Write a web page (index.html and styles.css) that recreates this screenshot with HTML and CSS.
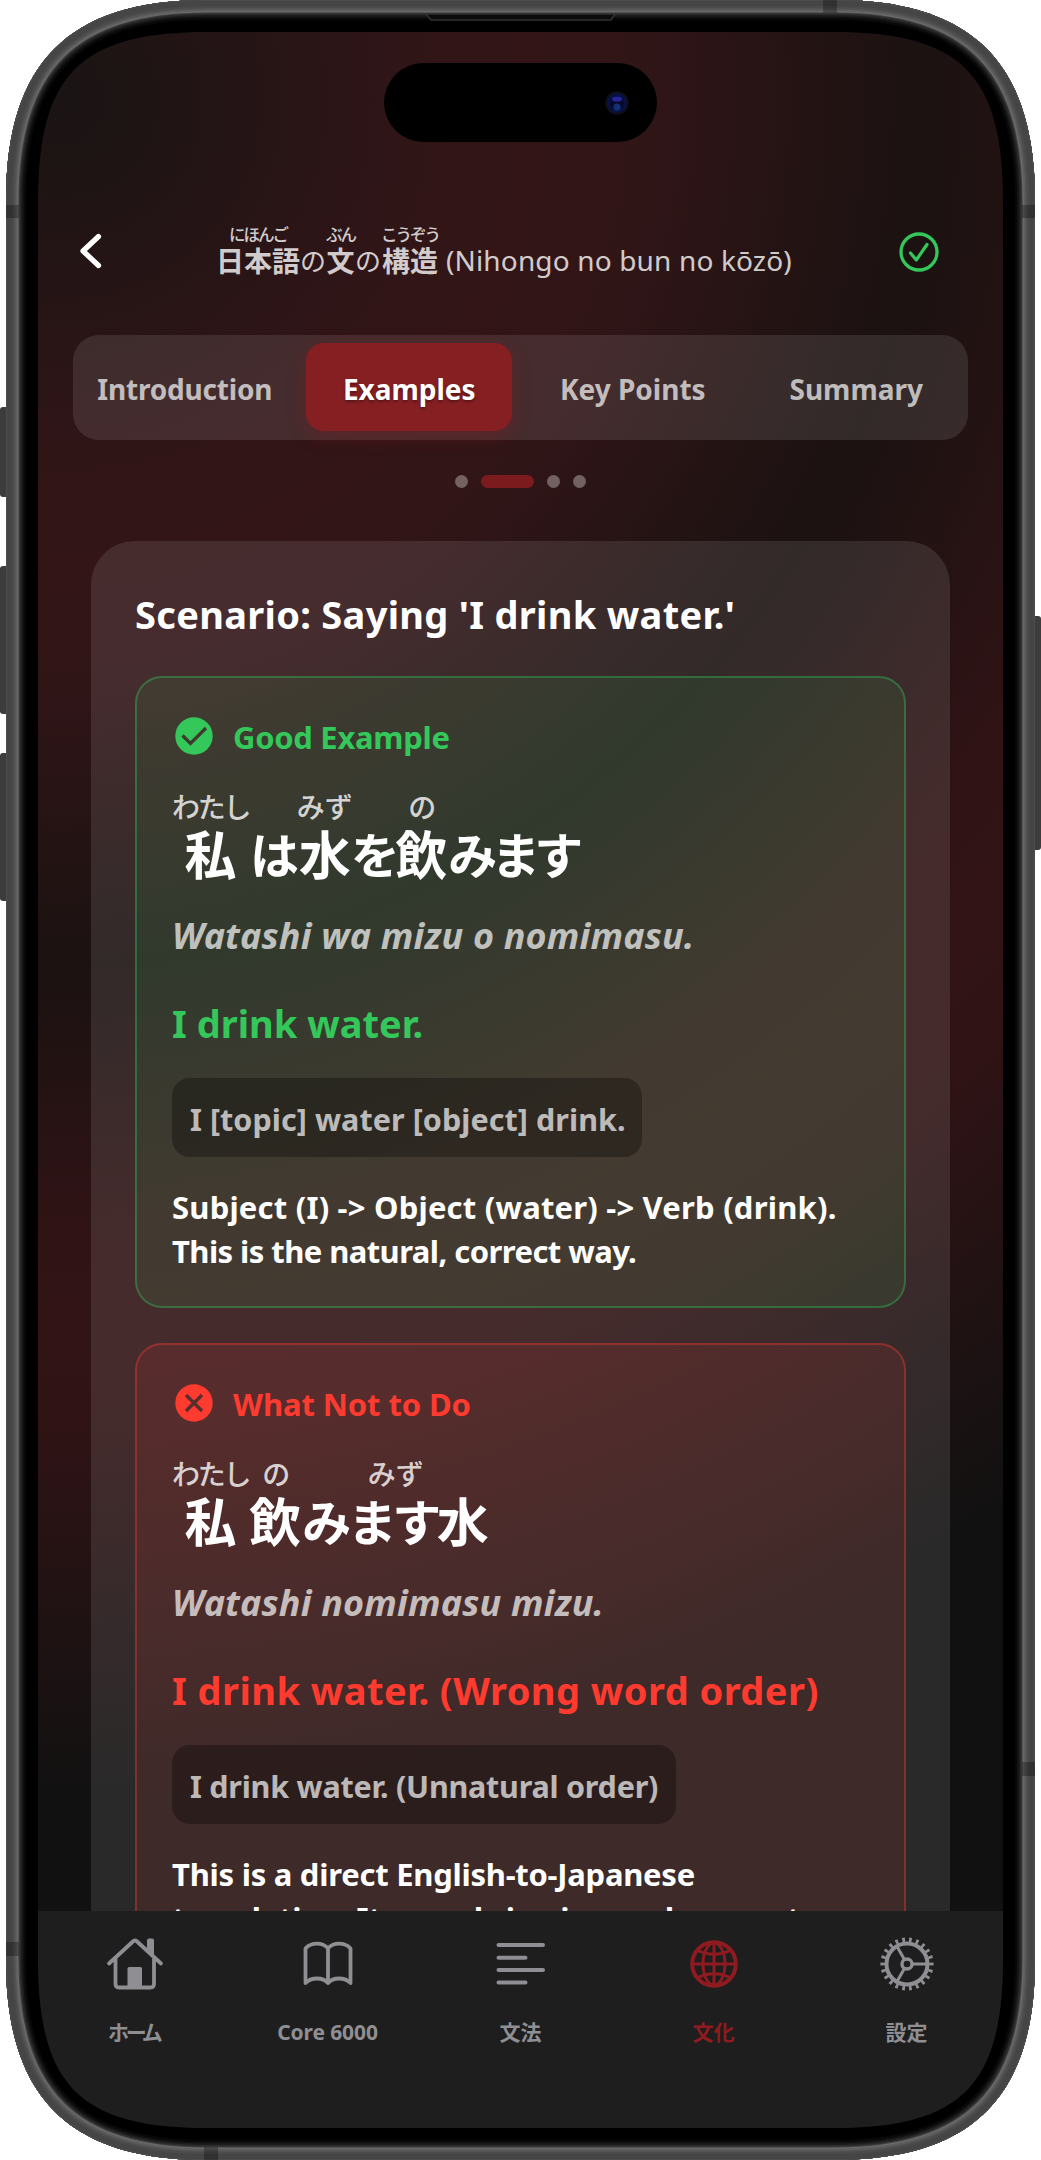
FILE: index.html
```html
<!DOCTYPE html>
<html lang="ja">
<head>
<meta charset="utf-8">
<title>日本語の文の構造</title>
<link rel="stylesheet" href="styles.css">
</head>
<body>
<div class="device">
  <svg class="frame" viewBox="0 0 1041 2160" aria-hidden="true">
    <defs>
      <path id="shell" d="M206 0H835C972 0 1035 63 1035 200V1960C1035 2097 972 2160 835 2160H206C69 2160 6 2097 6 1960V200C6 63 69 0 206 0Z"/>
      <clipPath id="shell-clip"><use href="#shell"/></clipPath>
    </defs>
    <g fill="#3c3c3c">
      <rect x="0" y="407" width="12" height="90" rx="3"/>
      <rect x="0" y="566" width="12" height="148" rx="3"/>
      <rect x="0" y="753" width="12" height="148" rx="3"/>
      <rect x="1029" y="616" width="12" height="234" rx="3"/>
    </g>
    <g clip-path="url(#shell-clip)" fill="none">
      <use href="#shell" fill="#000"/>
      <use href="#shell" stroke="#080808" stroke-width="40"/>
      <use href="#shell" stroke="#111" stroke-width="36"/>
      <use href="#shell" stroke="#1d1d1d" stroke-width="33"/>
      <use href="#shell" stroke="#2b2b2b" stroke-width="30"/>
      <use href="#shell" stroke="#404040" stroke-width="27"/>
      <use href="#shell" stroke="#686868" stroke-width="25"/>
      <use href="#shell" stroke="#5e5e5e" stroke-width="22"/>
      <use href="#shell" stroke="#535353" stroke-width="19"/>
      <use href="#shell" stroke="#4b4b4b" stroke-width="16"/>
      <use href="#shell" stroke="#454545" stroke-width="12"/>
      <use href="#shell" stroke="#4c4c4c" stroke-width="2"/>
      <g fill="#000" fill-opacity=".28">
        <rect x="823" y="0" width="14" height="13"/>
        <rect x="204" y="2147" width="14" height="13"/>
        <rect x="6" y="205" width="13" height="13"/>
        <rect x="6" y="1942" width="13" height="14"/>
        <rect x="1022" y="205" width="13" height="13"/>
        <rect x="1022" y="1762" width="13" height="14"/>
      </g>
    </g>
    <path d="M426 14L431 20H611L615 14Z" fill="#0c0c0c" stroke="#303030" stroke-width="1.6"/>
  </svg>

  <main class="screen">
    <div class="island">
      <svg width="24" height="24" viewBox="0 0 24 24"><circle cx="12" cy="12" r="11.5" fill="#10101c"/><circle cx="12" cy="12" r="9.5" fill="#08104a"/><circle cx="12" cy="12" r="7" fill="#050a2c"/><ellipse cx="12" cy="8" rx="5" ry="2.6" fill="#26269a"/><circle cx="12" cy="16" r="3.6" fill="#14306e"/></svg>
    </div>

    <header class="header">
      <svg class="back" width="27" height="40" viewBox="0 0 27 40"><path d="M20.500 5.500L5 20L20.500 34.500" fill="none" stroke="#fff" stroke-width="5.200" stroke-linecap="round" stroke-linejoin="round"/></svg>
      <h1 class="title">
        <span class="unit"><span class="kana">にほんご</span><b>日本語</b></span><span class="particle">の</span><span class="unit"><span class="kana">ぶん</span><b>文</b></span><span class="particle">の</span><span class="unit"><span class="kana">こうぞう</span><b>構造</b></span><span class="reading">(Nihongo no bun no kōzō)</span>
      </h1>
      <svg class="done" width="40" height="40" viewBox="0 0 40 40" fill="none" stroke="#34c759" stroke-linecap="round" stroke-linejoin="round"><circle cx="20" cy="20" r="18" stroke-width="3.300"/><path d="M11.500 21L17.300 28L28 12.500" stroke-width="3.200"/></svg>
    </header>

    <nav class="tabs">
      <span class="tab intro">Introduction</span>
      <span class="tab active">Examples</span>
      <span class="tab">Key Points</span>
      <span class="tab">Summary</span>
    </nav>

    <div class="dots"><i></i><i class="on"></i><i></i><i></i></div>

    <section class="card">
      <h2 class="scenario">Scenario: Saying 'I drink water.'</h2>

      <article class="example good">
        <div class="label"><svg width="38" height="38" viewBox="0 0 38 38"><circle cx="19" cy="19" r="18.700" fill="#34c759"/><path d="M7.500 18.500L15.500 26.500L31 11" fill="none" stroke="#3f3a2f" stroke-width="3.200"/></svg><span>Good Example</span></div>
        <div class="sentence">
          <span class="unit"><span class="kana">わたし</span><b>私</b></span><span class="plain topic">は</span><span class="unit short"><span class="kana">みず</span><b>水</b></span><span class="plain">を</span><span class="unit"><span class="kana">の</span><b>飲</b></span><span class="plain verb">みます</span>
        </div>
        <p class="romaji">Watashi wa mizu o nomimasu.</p>
        <p class="meaning">I drink water.</p>
        <p class="gloss">I [topic] water [object] drink.</p>
        <p class="note"><span class="wide">Subject (I) -&gt; Object (water) -&gt; Verb (drink).</span><span class="tight">This is the natural, correct way.</span></p>
      </article>

      <article class="example bad">
        <div class="label"><svg width="38" height="38" viewBox="0 0 38 38"><circle cx="19" cy="19" r="18.700" fill="#ff3b30"/><path d="M11 11L27 27M27 11L11 27" fill="none" stroke="#562e2e" stroke-width="3.300"/></svg><span>What Not to Do</span></div>
        <div class="sentence">
          <span class="unit"><span class="kana">わたし</span><b>私</b></span><span class="unit"><span class="kana">の</span><b>飲</b></span><span class="plain">み</span><span class="unit shifted"><span class="kana">みず</span><span class="plain">ます</span></span><b>水</b>
        </div>
        <p class="romaji">Watashi nomimasu mizu.</p>
        <p class="meaning">I drink water. (Wrong word order)</p>
        <p class="gloss">I drink water. (Unnatural order)</p>
        <p class="note"><span>This is a direct English-to-Japanese</span><span>translation. It sounds jarring and wrong to</span></p>
      </article>
    </section>

    <footer class="tabbar">
      <div class="item">
        <svg viewBox="-30 -30 60 60" stroke-width="3.800"><path d="M-26 -.500L-1.500 -23Q0 -24 1.500 -23L26 -.500M-19.500 -5V20Q-19.500 23.500 -16 23.500H15.500Q19 23.500 19 20V-5"/><path d="M12 -23.500Q12 -25.500 14 -25.500H17Q19 -25.500 19 -23.500V-8L12 -14Z" fill="currentColor" stroke="none"/><path d="M-7.500 23V4.500Q-7.500 3 -6 3H5.500Q7 3 7 4.500V23Z" fill="currentColor" stroke="none"/></svg>
        <span class="home">ホーム</span>
      </div>
      <div class="item">
        <svg viewBox="-30 -30 60 60" stroke-width="3.800"><path d="M0 -15.500C-5 -22 -17 -22 -22.500 -15.500V19C-17 13 -5 13 0 19C5 13 17 13 22.500 19V-15.500C17 -22 5 -22 0 -15.500V19"/></svg>
        <span class="core">Core 6000</span>
      </div>
      <div class="item">
        <svg viewBox="-30 -30 60 60" stroke-width="4"><path d="M-22.500 -19H22M-22.500 -6.300H4.500M-22.500 6H22M-22.500 18.500H4.500"/></svg>
        <span>文法</span>
      </div>
      <div class="item selected">
        <svg viewBox="-30 -30 60 60" stroke-width="3"><circle r="21.800" stroke-width="4"/><path d="M0 -21V21M-21 0H21M-17 -14Q0 -5.500 17 -14M-17 14Q0 5.500 17 14"/><ellipse rx="11" ry="21"/></svg>
        <span>文化</span>
      </div>
      <div class="item">
        <svg viewBox="-30 -30 60 60" stroke-width="3"><circle r="20.500" stroke-width="4"/><circle r="24.300" stroke-width="4.600" pathLength="22" stroke-dasharray=".4 .6" stroke-dashoffset=".2" stroke-linecap="butt"/><circle r="5" stroke-width="3.400"/><path d="M6 0H19M-3 -5.200L-9.700 -17M-3 5.200L-9.700 17"/></svg>
        <span>設定</span>
      </div>
    </footer>
  </main>
</div>
</body>
</html>
```
FILE: styles.css
```css
* { box-sizing: border-box; }

body {
  margin: 0;
  background: #fff;
  font-family: "Noto Sans", "Noto Sans CJK JP", sans-serif;
  font-weight: 700;
  color: #fff;
}

h1, h2, p { margin: 0; }

b { font-weight: 700; }

.device {
  position: relative;
  width: 1041px;
  height: 2160px;
  padding: 32px 38px;
  overflow: hidden;
}

.frame {
  position: absolute;
  inset: 0;
  width: 1041px;
  height: 2160px;
}

.screen {
  position: relative;
  display: flex;
  flex-direction: column;
  width: 965px;
  height: 2096px;
  overflow: hidden;
  background: radial-gradient(circle at 22px 68px, #1b1414 0, #1d1414 60px, #301517 350px, #331517 470px, #301517 590px, #1b1211 865px, #2f1315 1120px, #321416 1230px, #2f1315 1330px, #111 1700px);
  clip-path: path("M170 0H795C923 0 965 42 965 170V1926C965 2054 923 2096 795 2096H170C42 2096 0 2054 0 1926V170C0 42 42 0 170 0Z");
}

.island {
  display: flex;
  flex: none;
  align-items: center;
  justify-content: flex-end;
  width: 273px;
  height: 79px;
  margin: 31px 0 0 346px;
  padding-right: 28px;
  border-radius: 40px;
  background: #000;
}

/* Header */
.header {
  display: flex;
  flex: none;
  align-items: flex-start;
  height: 54px;
  margin-top: 84px;
  padding-left: 40px;
}

.back { flex: none; margin-top: 5px; }

.title {
  display: flex;
  flex: none;
  align-items: flex-end;
  width: 622px;
  height: 52px;
  margin-left: 111px;
  font-size: 28px;
  font-weight: 400;
  line-height: 36px;
  color: rgba(255, 255, 255, .8);
  white-space: nowrap;
}

.done { flex: none; margin: 6px 0 0 61px; }

.unit {
  display: flex;
  flex-direction: column;
  align-items: center;
  font-family: "Noto Sans CJK JP", sans-serif;
}

.title .kana {
  height: 16px;
  font-size: 16.500px;
  line-height: 17px;
  letter-spacing: -2px;
  font-weight: 500;
}

.particle {
  width: 26px;
  font-family: "Noto Sans CJK JP", sans-serif;
  font-size: 26px;
}

.reading {
  margin-left: 7px;
  letter-spacing: .15px;
}

/* Segmented tabs */
.tabs {
  display: flex;
  flex: none;
  width: 895px;
  height: 105px;
  margin: 55px 0 0 35px;
  border-radius: 26px;
  background: rgba(255, 255, 255, .1);
}

.tab {
  display: flex;
  flex: 1 1 0;
  align-items: center;
  justify-content: center;
  margin: 8px 9px 9px;
  padding-top: 3px;
  border-radius: 18px;
  font-size: 28px;
  color: rgba(255, 255, 255, .7);
  white-space: nowrap;
}

.intro { letter-spacing: -.2px; }

.tab.active {
  padding-left: 1px;
  background: #861f22;
  color: #fff;
  box-shadow: 0 5px 18px rgba(142, 27, 32, .35);
  text-shadow: 0 2px 3px rgba(0, 0, 0, .35);
}

.dots {
  display: flex;
  flex: none;
  gap: 13px;
  height: 13px;
  margin: 35px 0 0 416.500px;
}

.dots i {
  width: 13px;
  border-radius: 7px;
  background: rgba(255, 255, 255, .33);
}

.dots .on {
  width: 53px;
  background: #7c1b1e;
}

/* Lesson card */
.card {
  flex: 1 1 0;
  min-height: 0;
  width: 859px;
  margin: 53px 0 0 53px;
  padding: 49px 44px 0;
  overflow: hidden;
  border-radius: 44px 44px 0 0;
  background: rgba(255, 255, 255, .1);
}

.scenario {
  margin-bottom: 38px;
  font-size: 38px;
  line-height: 48px;
  letter-spacing: .3px;
  white-space: nowrap;
}

.example {
  height: 632px;
  padding: 36px 35px 0;
  border: 2px solid;
  border-radius: 27px;
  white-space: nowrap;
}

.good {
  margin-bottom: 35px;
  background: rgba(52, 199, 89, .1);
  border-color: rgba(52, 199, 89, .37);
}

.bad {
  background: rgba(255, 59, 48, .1);
  border-color: rgba(255, 59, 48, .35);
}

.label {
  display: flex;
  align-items: center;
  gap: 20px;
  height: 44px;
  padding-left: 3px;
  font-size: 31px;
  letter-spacing: -.3px;
}

.label span { padding-top: 2px; }

.bad .label { letter-spacing: -.1px; }

.sentence {
  display: flex;
  align-items: flex-end;
  height: 88px;
  margin-top: 35px;
  font-family: "Noto Sans CJK JP", sans-serif;
  font-size: 52px;
  line-height: 56px;
}

.sentence .kana {
  height: 34px;
  font-size: 28px;
  line-height: 30px;
  letter-spacing: -2.300px;
  font-weight: 500;
  color: rgba(255, 255, 255, .8);
}

.sentence .short { margin: 0 -3px; }

.sentence .short .kana,
.sentence .shifted .kana { letter-spacing: 0; }

.sentence .shifted .kana { padding-left: 8px; }

.plain {
  padding-left: 1px;
  font-size: 49px;
  letter-spacing: -4.500px;
}

.topic { padding: 0 5px 0 1px; }

.verb { letter-spacing: -6px; }

.romaji {
  margin-top: 32px;
  font-size: 36px;
  font-style: italic;
  line-height: 46px;
  letter-spacing: .17px;
  color: rgba(255, 255, 255, .7);
}

.meaning {
  margin-top: 39px;
  font-size: 38px;
  line-height: 50px;
}

.good .label, .good .meaning { color: #34c759; }
.bad .label, .bad .meaning { color: #ff3b30; }
.bad .meaning { letter-spacing: .45px; }

.gloss {
  width: max-content;
  height: 79px;
  margin-top: 30px;
  padding: 2px 16px 0 18px;
  border-radius: 18px;
  background: rgba(0, 0, 0, .3);
  font-size: 30.500px;
  line-height: 79px;
  letter-spacing: .06px;
  color: rgba(255, 255, 255, .7);
}

.bad .gloss { padding-right: 18px; letter-spacing: -.24px; }

.note {
  margin-top: 28px;
  font-size: 31px;
  line-height: 44px;
  letter-spacing: -.26px;
}

.note span { display: block; }
.note .wide { letter-spacing: .2px; }
.note .tight { letter-spacing: -.57px; }

/* Bottom navigation */
.tabbar {
  display: grid;
  flex: none;
  grid-template-columns: repeat(5, 1fr);
  height: 217px;
  padding-top: 23px;
  background: #1e1e1e;
}

.item {
  display: flex;
  flex-direction: column;
  align-items: center;
  color: #8e8e93;
  font-size: 21px;
  line-height: 28px;
}

.item svg {
  width: 60px;
  height: 60px;
  margin: 0 0 24px;
  fill: none;
  stroke: currentColor;
  stroke-linecap: round;
  stroke-linejoin: round;
}

.item.selected { color: #8f1b20; }
.item .home { margin-right: 2px; font-feature-settings: "palt"; letter-spacing: -3px; }
.item .core { letter-spacing: -.1px; }
```
